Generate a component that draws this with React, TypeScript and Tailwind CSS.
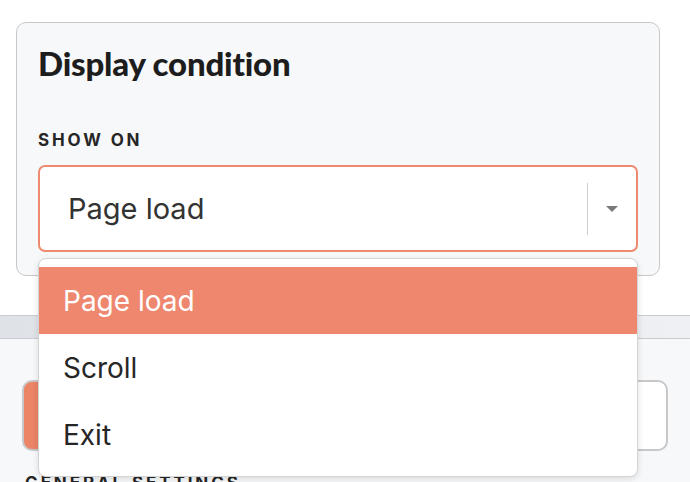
import { useState } from 'react';

const OPTIONS = ['Page load', 'Scroll', 'Exit'];

function Caret() {
  return (
    <svg width="14" height="8" viewBox="0 0 14 8" className="block">
      <path d="M1 1h12L7 7z" fill="#7a7a7a" />
    </svg>
  );
}

export default function App() {
  const [value] = useState('Page load');

  return (
    <div className="relative h-[482px] w-[690px] overflow-hidden bg-white" style={{ fontFamily: 'Inter, "Liberation Sans", sans-serif' }}>
      {/* display condition card */}
      <div className="px-4 pt-[22px]">
        <div className="h-[254px] w-[644px] rounded-[10px] border border-[#c8c8c8] bg-[#f7f8fa] px-[21px] pt-[20px]">
          <div className="text-[33px] font-black leading-[40px] tracking-[-0.2px] text-[#1d1d1d]" style={{ fontFamily: 'Lato, sans-serif' }}>
            Display condition
          </div>
          <div className="mt-[47px] text-[17px] font-bold leading-[20px] tracking-[0.17em] text-[#262626]">SHOW ON</div>
          <div className="mt-[15px] flex h-[87px] items-center rounded-[7px] border-2 border-[#ee8a70] bg-white pl-[28px]">
            <span className="flex-1 text-[29px] text-[#333]">{value}</span>
            <span className="h-[52px] w-px bg-[#cccccc]" />
            <span className="flex w-[48px] justify-center">
              <Caret />
            </span>
          </div>
        </div>
      </div>

      {/* panel behind the menu */}
      <div className="mt-[39px]">
        <div className="h-[24px] border-y border-[#c9ccd0] bg-gradient-to-r from-[#dfe3e8] to-[#eef0f3]" />
        <div className="h-[200px] bg-[#f7f8fa] px-[22px] pt-[41px]">
          <div className="flex gap-3">
            <div className="h-[71px] w-[120px] rounded-[10px] border-2 border-[#c8c8c8] bg-[#ec8466]" />
            <div className="h-[71px] flex-1 rounded-[10px] border-2 border-[#c8c8c8] bg-white" />
          </div>
          <div className="mt-[22px] pl-[3px] text-[17px] font-bold leading-[20px] tracking-[0.17em] text-[#262626]">GENERAL SETTINGS</div>
        </div>
      </div>

      {/* open dropdown menu */}
      <div className="absolute left-[38px] top-[258px] w-[600px] rounded-[8px] border border-[#d4d4d4] bg-white py-[8px] shadow-[0_2px_6px_rgba(0,0,0,0.12)]">
        {OPTIONS.map((opt) => (
          <div
            key={opt}
            className={
              opt === value
                ? 'flex h-[67px] items-center bg-[#ee876e] pl-[24px] text-[28px] text-white'
                : 'flex h-[67px] items-center pl-[24px] text-[28px] text-[#262626]'
            }
          >
            {opt}
          </div>
        ))}
      </div>
    </div>
  );
}
